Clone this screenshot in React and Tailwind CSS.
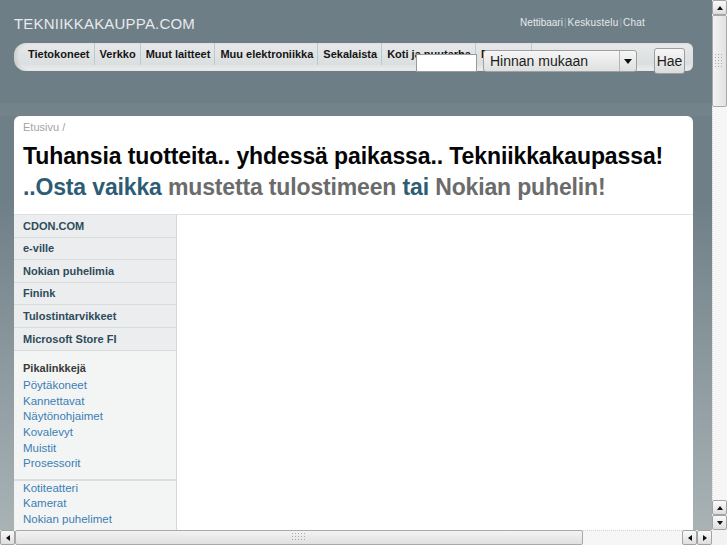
import React from "react";

function Tri({ dir }) {
  const pts = {
    up: "1,5 4,1 7,5",
    down: "1,1 4,5 7,1",
    left: "5,1 1,4 5,7",
    right: "1,1 5,4 1,7",
  }[dir];
  const w = dir === "up" || dir === "down" ? 8 : 6;
  const h = dir === "up" || dir === "down" ? 6 : 8;
  return (
    <svg width={w} height={h} viewBox={`0 0 ${w} ${h}`}>
      <polygon points={pts} fill="#111" />
    </svg>
  );
}

function SBtn({ dir }) {
  return (
    <div className="w-[15px] h-[15px] shrink-0 flex items-center justify-center rounded-[2px] border border-[#a3a3a3] bg-[linear-gradient(to_bottom,#fafafa,#dedede)]">
      <Tri dir={dir} />
    </div>
  );
}

function Grip({ vertical }) {
  const dots = [];
  for (let r = 0; r < (vertical ? 5 : 3); r++) {
    for (let c = 0; c < (vertical ? 3 : 5); c++) {
      dots.push(<rect key={`${r}-${c}`} x={c * 3} y={r * 3} width="1" height="1" fill="#a9a9a9" />);
    }
  }
  return (
    <svg width={vertical ? 9 : 15} height={vertical ? 15 : 9}>
      {dots}
    </svg>
  );
}

const navItems = [
  "Tietokoneet",
  "Verkko",
  "Muut laitteet",
  "Muu elektroniikka",
  "Sekalaista",
  "Koti ja puutarha",
];

const shops = [
  "CDON.COM",
  "e-ville",
  "Nokian puhelimia",
  "Finink",
  "Tulostintarvikkeet",
  "Microsoft Store FI",
];

const quick = ["Pöytäkoneet", "Kannettavat", "Näytönohjaimet", "Kovalevyt", "Muistit", "Prosessorit"];
const quick2 = ["Kotiteatteri", "Kamerat", "Nokian puhelimet"];

export default function App() {
  return (
    <div className="w-[727px] h-[545px] overflow-hidden flex flex-col font-['Liberation_Sans',Arial,sans-serif]">
      <div className="flex h-[530px]">
        {/* page */}
        <div className="w-[712px] h-[530px] overflow-hidden flex flex-col bg-[linear-gradient(to_bottom,#6f7f87_0px,#6f7f87_200px,#a9b3b6_530px)]">
          {/* header */}
          <div className="h-[103px] bg-[#6e7e86] pl-[14px] flex flex-col">
            <div className="w-[679px] flex items-start justify-between pt-[15px] pr-[48px]">
              <div className="text-[15px] leading-[18px] text-[#e6eaec] tracking-[0.2px]">TEKNIIKKAKAUPPA.COM</div>
              <div className="flex items-center text-[10px] leading-[14px] text-[#e3e9eb] pt-[1px]">
                <span>Nettibaari</span>
                <span className="text-[#98a5aa] mx-[1px]">|</span>
                <span className="tracking-[0.2px]">Keskustelu</span>
                <span className="text-[#98a5aa] mx-[1px]">|</span>
                <span className="tracking-[0.2px]">Chat</span>
              </div>
            </div>
            {/* nav bar */}
            <div className="relative mt-[10px] w-[679px] h-[28px] rounded-l-[12px] rounded-r-[6px] bg-[linear-gradient(to_bottom,#e6e8e9,#dcdfe0_75%,#eeefef)] shadow-[inset_3px_0_3px_rgba(0,0,0,0.08)]">
              <div className="flex items-start h-[22px] pl-[9px]">
                {navItems.map((t) => (
                  <div
                    key={t}
                    className="h-[22px] flex items-center pl-[5px] pr-[4px] border-r border-[#b5ccd3] text-[11px] font-bold text-[#151515] whitespace-nowrap"
                  >
                    {t}
                  </div>
                ))}
                <div className="h-[22px] w-[56px] flex items-center px-[5px] border-r border-[#b5ccd3] text-[11px] font-bold text-[#151515] whitespace-nowrap">
                  Pelit
                </div>
              </div>
              {/* search form overlays */}
              <div className="absolute left-[402px] top-[11px] w-[61px] h-[18px] bg-white border border-[#9a9a9a]"></div>
              <div className="absolute left-[469px] top-[7px] w-[154px] h-[22px] flex rounded-[3px] border border-[#a0a0a0] bg-[linear-gradient(to_bottom,#f6f6f6,#dedfdf)]">
                <div className="flex-1 flex items-center pl-[6px] text-[14px] text-[#1c1c1c]">Hinnan mukaan</div>
                <div className="w-[17px] border-l border-[#b5b5b5] flex items-center justify-center">
                  <svg width="8" height="5"><polygon points="0,0 8,0 4,5" fill="#111" /></svg>
                </div>
              </div>
              <div className="absolute left-[640px] top-[5px] w-[31px] h-[26px] flex items-center justify-center rounded-[3px] border border-[#9d9d9d] bg-[linear-gradient(to_bottom,#f7f7f7,#dcdcdc)] text-[14px] text-[#1c1c1c]">
                Hae
              </div>
            </div>
          </div>
          <div className="h-[13px] bg-[#74838a]"></div>
          {/* content box */}
          <div className="ml-[14px] w-[679px] flex-1 bg-white rounded-t-[6px] flex flex-col">
            <div className="px-[9px] pt-[5px] pb-[11px] border-b border-[#dfe1e2]">
              <div className="text-[11px] leading-[13px] text-[#a3a3a3]">Etusivu /</div>
              <h1 className="mt-[7px] text-[23px] leading-[31px] font-bold text-[#050505] whitespace-nowrap tracking-[-0.1px]">
                Tuhansia tuotteita.. yhdessä paikassa.. Tekniikkakaupassa!
              </h1>
              <p className="text-[23px] leading-[31px] font-bold whitespace-nowrap tracking-[-0.15px]">
                <span className="text-[#2d5d74]">..Osta vaikka</span>{" "}
                <span className="text-[#6b6b6b]">mustetta tulostimeen</span>{" "}
                <span className="text-[#2d5d74]">tai</span>{" "}
                <span className="text-[#6b6b6b]">Nokian puhelin!</span>
              </p>
            </div>
            <div className="flex flex-1">
              <aside className="w-[163px] border-r border-[#d4d8d9] bg-[#f3f5f5] flex flex-col">
                {shops.map((s) => (
                  <div
                    key={s}
                    className="h-[22.6px] flex items-center pl-[9px] bg-[#ebedee] border-b border-[#d8dbdc] text-[11px] font-bold text-[#2e4c5b]"
                  >
                    {s}
                  </div>
                ))}
                <div className="pt-[10px] pb-[7px] px-[9px] text-[11.5px] leading-[15.6px]">
                  <div className="font-bold text-[#3a3a3a] text-[11px] mb-[2px]">Pikalinkkejä</div>
                  {quick.map((q) => (
                    <div key={q} className="text-[#3b7db4]">{q}</div>
                  ))}
                </div>
                <div className="border-t-2 border-[#dadedf] px-[9px] text-[11.5px] leading-[15.6px]">
                  {quick2.map((q) => (
                    <div key={q} className="text-[#3b7db4]">{q}</div>
                  ))}
                </div>
              </aside>
              <div className="flex-1 bg-white"></div>
            </div>
          </div>
        </div>
        {/* vertical scrollbar */}
        <div className="w-[15px] h-[530px] flex flex-col bg-[#f4f4f4]">
          <SBtn dir="up" />
          <div className="h-[92px] shrink-0 rounded-[2px] border border-[#a9a9a9] bg-[linear-gradient(to_right,#f3f3f3,#e2e2e2)] flex items-center justify-center">
            <Grip vertical />
          </div>
          <div className="flex-1 border-l border-dotted border-[#d4d4d4] bg-[#f6f6f6]"></div>
          <SBtn dir="up" />
          <SBtn dir="down" />
        </div>
      </div>
      {/* horizontal scrollbar */}
      <div className="flex h-[15px]">
        <div className="w-[712px] h-[15px] flex bg-[#f4f4f4]">
          <SBtn dir="left" />
          <div className="w-[568px] shrink-0 rounded-[2px] border border-[#a9a9a9] bg-[linear-gradient(to_bottom,#f3f3f3,#e0e0e0)] flex items-center justify-center">
            <Grip />
          </div>
          <div className="flex-1 border-t border-dotted border-[#d4d4d4] bg-[#f6f6f6]"></div>
          <SBtn dir="left" />
          <SBtn dir="right" />
        </div>
        <div className="w-[15px] h-[15px] bg-[#f2f2f2]"></div>
      </div>
    </div>
  );
}
